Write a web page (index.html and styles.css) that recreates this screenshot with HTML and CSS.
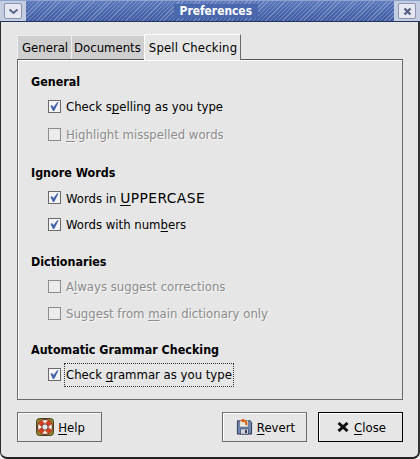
FILE: index.html
```html
<!DOCTYPE html>
<html lang="en">
<head>
    <meta charset="UTF-8">
    <meta name="viewport" content="width=device-width, initial-scale=1.0">
    <title>Preferences</title>
    <link rel="stylesheet" href="styles.css">
</head>
<body>
    <div class="window">
        <header class="titlebar">
            <div class="title-cap title-cap-left">
                <span class="title-btn">
                    <svg width="11" height="7" viewBox="0 0 11 7"><path d="M1.5 1.5 L5.5 5 L9.5 1.5" fill="none" stroke="#5a6484" stroke-width="2"/></svg>
                </span>
            </div>
            <div class="title-hatch"><span class="title-text">Preferences</span></div>
            <div class="title-cap title-cap-right">
                <span class="title-btn">
                    <svg width="9" height="9" viewBox="0 0 9 9"><path d="M1.5 1.5 L7.5 7.5 M7.5 1.5 L1.5 7.5" fill="none" stroke="#5a6484" stroke-width="2.4"/></svg>
                </span>
            </div>
        </header>

        <main class="content">
            <div class="tabs">
                <div class="tab">General</div>
                <div class="tab">Documents</div>
                <div class="tab active">Spell Checking</div>
            </div>

            <div class="panel">
                <section class="group group-general">
                    <h3>General</h3>
                    <label class="check on">
                        <span class="box"><svg width="11" height="11" viewBox="0 0 11 11"><path d="M1.5 5 L3 4 L4.5 6 L8.5 1 L9.5 1.5 L5.2 10 L4 10 Z" fill="#4464ac"/></svg></span>
                        <span>Check s<u>p</u>elling as you type</span>
                    </label>
                    <label class="check off">
                        <span class="box"></span>
                        <span><u>H</u>ighlight misspelled words</span>
                    </label>
                </section>

                <section class="group group-ignore">
                    <h3>Ignore Words</h3>
                    <label class="check on">
                        <span class="box"><svg width="11" height="11" viewBox="0 0 11 11"><path d="M1.5 5 L3 4 L4.5 6 L8.5 1 L9.5 1.5 L5.2 10 L4 10 Z" fill="#4464ac"/></svg></span>
                        <span>Words in <span class="caps"><u>U</u>PPERCASE</span></span>
                    </label>
                    <label class="check on">
                        <span class="box"><svg width="11" height="11" viewBox="0 0 11 11"><path d="M1.5 5 L3 4 L4.5 6 L8.5 1 L9.5 1.5 L5.2 10 L4 10 Z" fill="#4464ac"/></svg></span>
                        <span>Words with num<u>b</u>ers</span>
                    </label>
                </section>

                <section class="group group-dict">
                    <h3>Dictionaries</h3>
                    <label class="check off">
                        <span class="box"></span>
                        <span>A<u>l</u>ways suggest corrections</span>
                    </label>
                    <label class="check off">
                        <span class="box"></span>
                        <span>Suggest from <u>m</u>ain dictionary only</span>
                    </label>
                </section>

                <section class="group group-grammar">
                    <h3>Automatic Grammar Checking</h3>
                    <label class="check on">
                        <span class="box"><svg width="11" height="11" viewBox="0 0 11 11"><path d="M1.5 5 L3 4 L4.5 6 L8.5 1 L9.5 1.5 L5.2 10 L4 10 Z" fill="#4464ac"/></svg></span>
                        <span class="focus-label">Check <u>g</u>rammar as you type</span>
                    </label>
                </section>
            </div>

            <div class="buttons">
                <button class="btn">
                    <svg width="18" height="18" viewBox="0 0 18 18">
                        <rect x="0.5" y="0.5" width="17" height="17" rx="3" fill="#8f8230" stroke="#4a4420"/>
                        <circle cx="9" cy="9" r="7.5" fill="#f0ece4" stroke="#6a2a18"/>
                        <path d="M4 4 L6.8 6.8 M14 4 L11.2 6.8 M4 14 L6.8 11.2 M14 14 L11.2 11.2" stroke="#d4401e" stroke-width="5"/>
                        <circle cx="9" cy="9" r="3.2" fill="#e6e6e6" stroke="#6a2a18"/>
                    </svg>
                    <span><u>H</u>elp</span>
                </button>
                <div class="spacer"></div>
                <button class="btn">
                    <svg width="17" height="18" viewBox="0 0 18 18">
                        <path d="M1.5 2.5 H15 L16.5 4 V16.5 H1.5 Z" fill="#7088b8" stroke="#2c3450"/>
                        <rect x="4" y="2" width="9" height="7" fill="#eceae4" stroke="#606470" stroke-width="0.6"/>
                        <rect x="5" y="11" width="8" height="5.5" fill="#d4d6dc" stroke="#2c3450" stroke-width="0.6"/>
                        <rect x="9.5" y="12" width="2" height="3.5" fill="#2c3450"/>
                        <path d="M11 7 A4 4 0 0 0 7 2" fill="none" stroke="#d8641c" stroke-width="2.4"/>
                        <path d="M8 0 L4 2 L8 4.6 Z" fill="#d8641c"/>
                    </svg>
                    <span><u>R</u>evert</span>
                </button>
                <button class="btn default">
                    <svg width="12" height="10" viewBox="0 0 12 10"><path d="M1.5 1 L10.5 9 M10.5 1 L1.5 9" fill="none" stroke="#111" stroke-width="3"/></svg>
                    <span><u>C</u>lose</span>
                </button>
            </div>
        </main>
    </div>
</body>
</html>
```

FILE: styles.css
```css
* {
    margin: 0;
    padding: 0;
    box-sizing: border-box;
}

html, body {
    width: 420px;
    height: 459px;
    overflow: hidden;
    background: #fff;
}

body {
    font-family: 'DejaVu Sans Condensed', 'DejaVu Sans', sans-serif;
    font-size: 13px;
    color: #000;
}

u {
    text-underline-offset: 2px;
    text-decoration-skip-ink: none;
}

.caps {
    font-family: 'DejaVu Sans', sans-serif;
    font-size: 13.8px;
    letter-spacing: 0.45px;
}

.window {
    width: 420px;
    height: 459px;
    display: flex;
    flex-direction: column;
    background: #e6e6e6;
    border-left: 1px solid #2a2a2a;
    border-right: 2px solid #333;
    border-bottom: 2px solid #222;
    border-radius: 0 0 7px 7px;
}

.titlebar {
    height: 22px;
    margin: 0 -2px 0 -1px;
    display: flex;
    flex-shrink: 0;
    background: #4a68ae;
    border-top: 1px solid #8ea2cf;
    border-bottom: 1px solid #24345c;
}

.title-cap {
    width: 26px;
    display: flex;
    align-items: center;
    justify-content: center;
    background: #c4cde2;
}

.title-btn {
    width: 18px;
    height: 16px;
    display: flex;
    align-items: center;
    justify-content: center;
    background: #e6e9f3;
    border: 1px solid #8b93ad;
    border-radius: 2px;
}

.title-hatch {
    flex: 1;
    display: flex;
    align-items: center;
    justify-content: flex-end;
    padding-right: 136px;
    background:
        repeating-linear-gradient(135deg, rgba(255,255,255,0.24) 0 1px, rgba(255,255,255,0) 1px 3px),
        linear-gradient(#5a78bb, #3f5ca3);
}

.title-text {
    color: #fff;
    font-weight: bold;
    font-size: 11.9px;
    padding: 0 6px;
    background: #4a68ae;
}

.content {
    flex: 1;
    padding: 12px 15px 0 16px;
    display: flex;
    flex-direction: column;
}

.tabs {
    display: flex;
    align-items: flex-end;
    height: 25px;
    position: relative;
    z-index: 1;
}

.tab {
    height: 24px;
    line-height: 23px;
    padding: 0 3px 0 2px;
    background: #cfcfcf;
    border: 1px solid #6a6a6a;
    border-bottom: 0;
    margin-right: -1px;
    border-top-color: #eee;
    border-left-color: #eee;
}

.tab:first-child {
    padding: 0 3px 0 4px;
}

.tab.active {
    height: 26px;
    line-height: 25px;
    padding: 0 3px 0 4px;
    letter-spacing: 0.15px;
    margin-bottom: -1px;
    background: #e6e6e6;
    border-top-color: #fff;
    border-left-color: #fff;
}

.panel {
    height: 341px;
    padding: 14px 0 0 13px;
    border: 1px solid #6a6a6a;
    border-top-color: #555;
    box-shadow: inset 1px 1px 0 #fff;
}

.group h3 {
    font-size: 12.4px;
    line-height: 16px;
    font-weight: bold;
    margin-bottom: 3px;
}

.check {
    display: flex;
    align-items: center;
    height: 27px;
    padding-left: 17px;
}

.box {
    width: 13px;
    height: 13px;
    margin-right: 5px;
    display: flex;
    align-items: center;
    justify-content: center;
    background: #fff;
    border: 1px solid #6a6a6a;
}

.check.on .box {
    background: #f4f4f6;
}

.check.off {
    color: #8c8c8c;
    text-shadow: 1px 1px 0 #f6f6f6;
}

.check.off .box {
    border-color: #8c8c8c;
    background: #ececec;
}

.group-general .check + .check {
    margin-top: 1px;
}

.group-ignore {
    margin-top: 17px;
}

.group-dict {
    margin-top: 16px;
}

.group-grammar {
    margin-top: 15px;
}

.focus-label {
    margin-left: -1px;
    padding: 3px 1px;
    outline: 1px dotted #333;
    line-height: 16px;
}

.buttons {
    display: flex;
    margin-top: 12px;
    gap: 11px;
}

.spacer {
    flex: 1;
}

.btn {
    width: 85px;
    height: 30px;
    display: flex;
    align-items: center;
    justify-content: center;
    gap: 4px;
    padding-left: 2px;
    font: inherit;
    color: #000;
    background: #e6e6e6;
    border: 1px solid #6a6a6a;
    border-top-color: #777;
    box-shadow: inset 1px 1px 0 #fff;
}

.btn.default {
    border-color: #000;
    gap: 5px;
}
```
